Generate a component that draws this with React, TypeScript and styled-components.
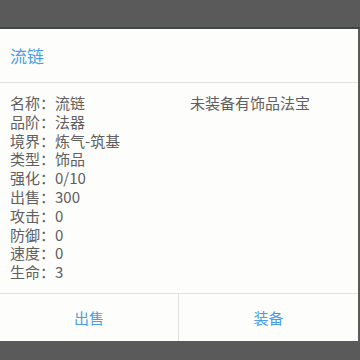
import * as React from "react"
import styled, { createGlobalStyle } from "styled-components"

const GlobalStyle = createGlobalStyle`
  html, body {
    margin: 0;
    padding: 0;
    background: #5a5a5a;
    font-family: "Noto Sans CJK SC", "Noto Sans", sans-serif;
  }
`

const Screen = styled.div`
  width: 360px;
  height: 360px;
  display: flex;
  flex-direction: column;
  background: #5a5a5a;
  overflow: hidden;
`

const TopBar = styled.div`
  height: 27px;
  border-bottom: 2px solid #3f4646;
`

const Dialog = styled.div`
  width: 358px;
  height: 312px;
  background: #fdfdfb;
  display: flex;
  flex-direction: column;
`

const Title = styled.div`
  height: 53px;
  display: flex;
  align-items: center;
  padding: 0 10px;
  font-size: 17px;
  color: #4a9ee8;
  border-bottom: 1px solid #e2e2e0;
`

const Body = styled.div`
  flex: 1;
  display: grid;
  grid-template-columns: 180px 1fr;
  padding: 11px 10px 0;
  border-bottom: 1px solid #e2e2e0;
`

const StatList = styled.div`
  display: flex;
  flex-direction: column;
`

const Line = styled.div`
  font-size: 15px;
  line-height: 18.8px;
  color: #606060;
  white-space: nowrap;
`

const Footer = styled.div`
  height: 47px;
  display: grid;
  grid-template-columns: 179px 1fr;
`

const Action = styled.div<{ $divider?: boolean }>`
  display: flex;
  align-items: center;
  justify-content: center;
  padding-bottom: 1px;
  font-size: 15px;
  color: #4a9ee8;
  border-right: ${(p) => (p.$divider ? "1px solid #e2e2e0" : "none")};
`

const stats = [
  ["名称", "流链"],
  ["品阶", "法器"],
  ["境界", "炼气-筑基"],
  ["类型", "饰品"],
  ["强化", "0/10"],
  ["出售", "300"],
  ["攻击", "0"],
  ["防御", "0"],
  ["速度", "0"],
  ["生命", "3"],
]

export default function App() {
  return (
    <Screen>
      <GlobalStyle />
      <TopBar />
      <Dialog>
        <Title>流链</Title>
        <Body>
          <StatList>
            {stats.map(([k, v]) => (
              <Line key={k}>
                {k}：{v}
              </Line>
            ))}
          </StatList>
          <Line>未装备有饰品法宝</Line>
        </Body>
        <Footer>
          <Action $divider>出售</Action>
          <Action>装备</Action>
        </Footer>
      </Dialog>
    </Screen>
  )
}
